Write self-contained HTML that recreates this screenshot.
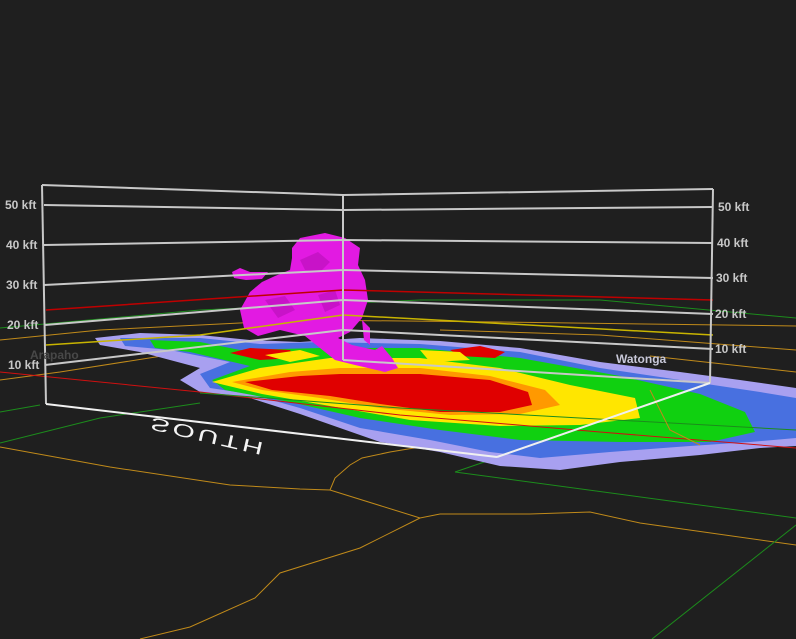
<!DOCTYPE html>
<html><head><meta charset="utf-8"><style>
html,body{margin:0;padding:0;background:#1f1f1f;width:796px;height:639px;overflow:hidden}
svg{display:block}
text{font-family:"Liberation Sans",sans-serif;font-weight:bold;font-size:12px;fill:#c8c8c8}
</style></head><body>
<svg width="796" height="639" viewBox="0 0 796 639" xmlns="http://www.w3.org/2000/svg">
<rect width="796" height="639" fill="#1f1f1f"/>
<g fill="none" stroke-width="1">
<polyline stroke="#c08a1a" points="0,447 110,467 230,485 300,489 330,490 420,518 440,514 530,514 590,512 640,523 796,545"/>
<polyline stroke="#c08a1a" points="330,490 335,478 350,465 362,458 390,452 420,447 470,430 520,418"/>
<polyline stroke="#c08a1a" points="420,518 360,548 280,573 255,598 190,627 140,639"/>
<polyline stroke="#1c8c1c" points="0,443 100,418 200,403"/>
<polyline stroke="#1c8c1c" points="455,472 496,458"/>
<polyline stroke="#1c8c1c" points="455,472 796,518"/>
<polyline stroke="#1c8c1c" points="652,639 796,525"/>
<polyline stroke="#1c8c1c" points="0,412 40,405"/>
<polyline stroke="#c08a1a" points="0,380 60,372 200,350"/>
<polyline stroke="#1c8c1c" points="0,328 200,310 420,300 600,300 796,318"/>
<polyline stroke="#c08a1a" points="0,340 100,330 300,320 500,322 796,326"/>
<polyline stroke="#c08a1a" points="440,330 600,335 796,350"/>
<polyline stroke="#c08a1a" points="650,356 796,372"/>
</g>
<path fill="#a8a0f0" d="M95,338 L140,333 L200,335 L250,340 L300,342 L360,338 L440,341 L520,348 L600,362 L680,372 L740,380 L796,388 L796,446 L760,448 L700,455 L620,462 L560,470 L500,466 L440,452 L380,442 L300,414 L250,398 L200,392 L180,380 L200,368 L140,352 L100,345Z"/>
<path fill="#4870e0" d="M120,338 L200,338 L260,344 L320,342 L420,344 L520,352 L600,368 L680,380 L760,392 L796,398 L796,438 L750,442 L690,446 L610,452 L540,458 L490,452 L430,440 L360,428 L300,408 L250,394 L210,388 L200,374 L230,362 L170,350 L125,346Z"/>
<path fill="#10d010" d="M150,340 L200,342 L240,350 L320,348 L420,348 L520,358 L620,376 L700,394 L745,412 L755,432 L710,442 L620,442 L520,440 L440,430 L360,418 L290,402 L225,390 L212,380 L250,366 L190,352 L155,348Z"/>
<path fill="#ffe600" d="M212,382 L260,368 L330,358 L420,358 L500,368 L570,385 L635,398 L640,418 L580,425 L500,426 L410,420 L330,406 L262,394Z"/>
<path fill="#ff9900" d="M232,382 L290,372 L340,368 L420,368 L490,376 L545,390 L560,405 L520,414 L450,415 L380,408 L320,398 L262,390Z"/>
<path fill="#e00000" d="M245,382 L300,376 L340,374 L420,374 L490,380 L528,392 L532,405 L500,412 L440,412 L380,404 L330,396 L272,390Z"/>
<path fill="#e00000" d="M230,353 L250,348 L290,350 L295,358 L260,360Z"/>
<path fill="#e00000" d="M450,350 L480,346 L505,352 L495,358 L460,356Z"/>
<path fill="#ffe600" d="M265,355 L300,350 L320,356 L290,362Z"/>
<path fill="#ffe600" d="M420,350 L460,352 L470,360 L430,362Z"/>
<g fill="none" stroke-width="1">
<polyline stroke="#d01010" points="0,372 200,392 400,415 600,432 796,448"/>
<polyline stroke="#1c8c1c" points="200,393 400,408 796,430"/>
<polyline stroke="#c08a1a" points="650,390 660,410 670,430 700,445"/>
</g>
<g fill="#e21ae2">
<path d="M292,248 L300,238 L325,233 L345,238 L360,248 L358,265 L365,280 L368,300 L362,318 L350,332 L338,338 L352,345 L375,350 L398,368 L385,372 L355,365 L335,360 L320,348 L305,336 L280,330 L258,336 L244,328 L240,310 L250,292 L262,282 L275,276 L290,270 L292,258Z"/>
<path d="M232,272 L240,268 L250,272 L268,272 L262,279 L246,280 L234,278Z"/>
<path d="M362,320 L370,328 L370,345 L364,340Z"/>
<path d="M375,350 L382,346 L392,358 L398,368 L385,368Z"/>
</g>
<g fill="#b810b8" opacity="0.6">
<path d="M300,260 L318,252 L330,262 L320,272 L305,270Z"/>
<path d="M265,300 L285,296 L295,310 L278,318Z"/>
<path d="M318,295 L335,290 L340,305 L325,312Z"/>
</g>
<polyline fill="none" stroke="#c00000" stroke-width="1.5" points="46,310 343,290 713,300"/>
<polyline fill="none" stroke="#c8b400" stroke-width="1.5" points="46,345 200,335 343,315 713,335"/>
<g fill="none" stroke="#c8c8c8" stroke-width="2">
<polyline points="42,185 343,195 713,189"/>
<line x1="343" y1="195" x2="343" y2="360"/>
<line x1="42" y1="185" x2="46" y2="404"/>
<line x1="713" y1="189" x2="710" y2="383"/>
<line x1="44" y1="205" x2="343" y2="210"/>
<line x1="343" y1="210" x2="713" y2="207"/>
<line x1="44" y1="245" x2="343" y2="240"/>
<line x1="343" y1="240" x2="713" y2="243"/>
<line x1="44" y1="285" x2="343" y2="270"/>
<line x1="343" y1="270" x2="713" y2="278"/>
<line x1="45" y1="325" x2="343" y2="300"/>
<line x1="343" y1="300" x2="713" y2="314"/>
<line x1="45" y1="365" x2="343" y2="330"/>
<line x1="343" y1="330" x2="713" y2="349"/>
<line x1="343" y1="360" x2="710" y2="383"/>
</g>
<g fill="none" stroke="#f0f0f0" stroke-width="2">
<line x1="46" y1="404" x2="497" y2="457"/>
<line x1="497" y1="457" x2="710" y2="383"/>
</g>
<text x="5" y="209">50 kft</text>
<text x="6" y="249">40 kft</text>
<text x="6" y="289">30 kft</text>
<text x="7" y="329">20 kft</text>
<text x="8" y="369">10 kft</text>
<text x="718" y="211">50 kft</text>
<text x="717" y="247">40 kft</text>
<text x="716" y="282">30 kft</text>
<text x="715" y="318">20 kft</text>
<text x="715" y="353">10 kft</text>
<text x="616" y="363" style="fill:#c8c8d8">Watonga</text>
<text x="30" y="359" style="fill:#484848">Arapaho</text>
<text x="0" y="0" style="fill:#f4f4f4;font-size:24px;font-weight:normal;letter-spacing:3px" transform="translate(152,417) rotate(13) scale(1.2,-0.75)">SOUTH</text>
</svg>
</body></html>
